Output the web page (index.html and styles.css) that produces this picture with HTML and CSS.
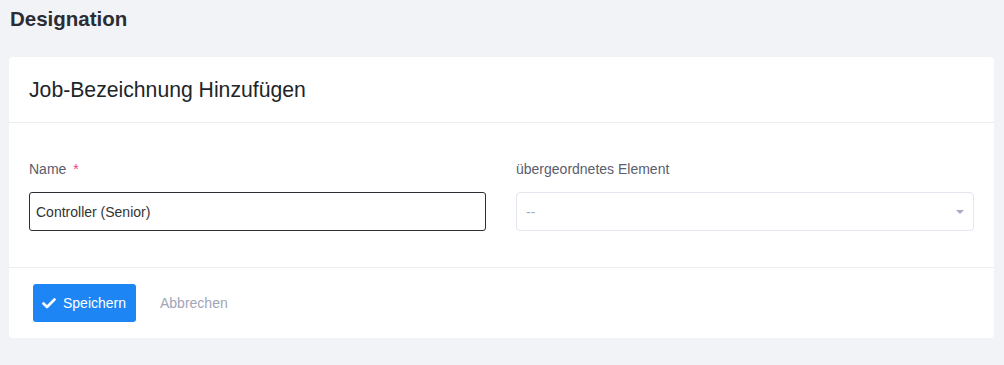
FILE: index.html
```html
<!DOCTYPE html>
<html lang="de">
<head>
    <meta charset="UTF-8">
    <title>Designation</title>
    <link rel="stylesheet" href="styles.css">
</head>
<body>
    <div class="page">
        <h1 class="page-title">Designation</h1>

        <div class="card">
            <div class="card-header">
                <h2>Job-Bezeichnung Hinzufügen</h2>
            </div>

            <div class="card-body">
                <div class="form-group">
                    <label>Name <span class="required">*</span></label>
                    <input type="text" class="form-input" value="Controller (Senior)">
                </div>
                <div class="form-group">
                    <label>übergeordnetes Element</label>
                    <div class="form-select">
                        <span>--</span>
                        <span class="caret"></span>
                    </div>
                </div>
            </div>

            <div class="card-footer">
                <button class="btn-save">
                    <svg width="14" height="11" viewBox="0 0 14 11"><path d="M1.5 5.5 L5 9 L12.5 1.5" fill="none" stroke="#fff" stroke-width="2.6" stroke-linecap="round" stroke-linejoin="round"/></svg>
                    Speichern
                </button>
                <a class="btn-cancel" href="#">Abbrechen</a>
            </div>
        </div>
    </div>
</body>
</html>
```

FILE: styles.css
```css
body {
    margin: 0;
    background: #f2f3f7;
    font-family: 'Liberation Sans', Arial, sans-serif;
    color: #212529;
}

.page {
    padding: 7px 10px 0 9px;
}

.page-title {
    font-size: 20.5px;
    font-weight: bold;
    color: #2a2d33;
    margin: 0 0 26px 1px;
    line-height: 24px;
}

.card {
    background: #fff;
    border-radius: 4px;
    width: 985px;
}

.card-header {
    height: 65px;
    display: flex;
    align-items: center;
    padding: 0 20px;
    border-bottom: 1px solid #ebedf2;
}

.card-header h2 {
    margin: 0;
    font-size: 21.2px;
    font-weight: normal;
    color: #212529;
}

.card-body {
    display: grid;
    grid-template-columns: 457px 1fr;
    gap: 30px;
    padding: 38px 20px 36px 20px;
    border-bottom: 1px solid #ebedf2;
}

.form-group {
    display: flex;
    flex-direction: column;
}

.form-group label {
    font-size: 14px;
    color: #595d6e;
    line-height: 17px;
    margin-bottom: 14px;
}

.required {
    color: #fd397a;
    margin-left: 3px;
}

.form-input {
    height: 39px;
    box-sizing: border-box;
    border: 1px solid #2c2e33;
    border-radius: 3px;
    padding: 0 6px;
    font-family: inherit;
    font-size: 14px;
    color: #333;
    outline: none;
}

.form-select {
    height: 39px;
    box-sizing: border-box;
    border: 1px solid #e4e6ef;
    border-radius: 4px;
    padding: 0 9px;
    display: flex;
    align-items: center;
    justify-content: space-between;
    font-size: 14px;
    color: #a7abc3;
}

.caret {
    width: 0;
    height: 0;
    border-left: 4px solid transparent;
    border-right: 4px solid transparent;
    border-top: 4px solid #a7abc3;
}

.card-footer {
    display: flex;
    align-items: center;
    padding: 16px 24px 16px 24px;
}

.btn-save {
    display: flex;
    align-items: center;
    gap: 7px;
    height: 38px;
    padding: 0 9px;
    background: #1e86f4;
    color: #fff;
    border: none;
    border-radius: 3px;
    font-family: inherit;
    font-size: 14px;
    width: 103px;
}

.btn-cancel {
    margin-left: 24px;
    font-size: 14px;
    color: #a1a5b7;
    text-decoration: none;
}
```
